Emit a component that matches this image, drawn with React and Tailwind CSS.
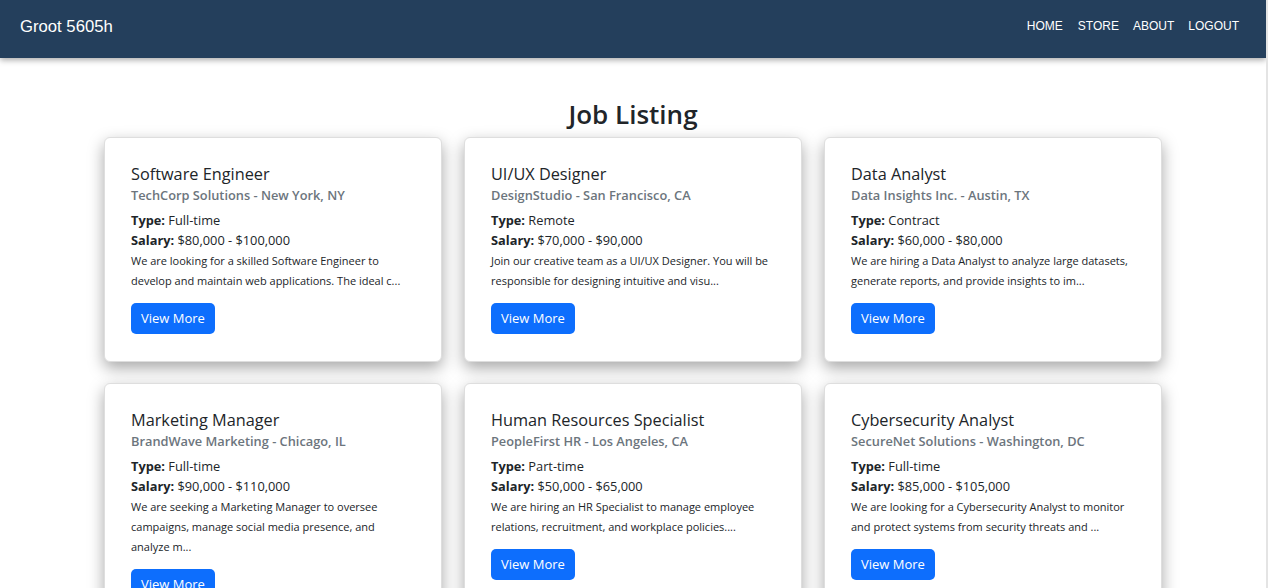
import React from "react";

const jobs = [
  {
    title: "Software Engineer",
    company: "TechCorp Solutions - New York, NY",
    type: "Full-time",
    salary: "$80,000 - $100,000",
    desc: "We are looking for a skilled Software Engineer to develop and maintain web applications. The ideal c...",
  },
  {
    title: "UI/UX Designer",
    company: "DesignStudio - San Francisco, CA",
    type: "Remote",
    salary: "$70,000 - $90,000",
    desc: "Join our creative team as a UI/UX Designer. You will be responsible for designing intuitive and visu...",
  },
  {
    title: "Data Analyst",
    company: "Data Insights Inc. - Austin, TX",
    type: "Contract",
    salary: "$60,000 - $80,000",
    desc: "We are hiring a Data Analyst to analyze large datasets, generate reports, and provide insights to im...",
  },
  {
    title: "Marketing Manager",
    company: "BrandWave Marketing - Chicago, IL",
    type: "Full-time",
    salary: "$90,000 - $110,000",
    desc: "We are seeking a Marketing Manager to oversee campaigns, manage social media presence, and analyze m...",
  },
  {
    title: "Human Resources Specialist",
    company: "PeopleFirst HR - Los Angeles, CA",
    type: "Part-time",
    salary: "$50,000 - $65,000",
    desc: "We are hiring an HR Specialist to manage employee relations, recruitment, and workplace policies....",
  },
  {
    title: "Cybersecurity Analyst",
    company: "SecureNet Solutions - Washington, DC",
    type: "Full-time",
    salary: "$85,000 - $105,000",
    desc: "We are looking for a Cybersecurity Analyst to monitor and protect systems from security threats and ...",
  },
];

function JobCard({ job }) {
  return (
    <div className="bg-white border border-[#dedede] rounded-[6px] shadow-[0_6px_16px_rgba(0,0,0,0.35)] px-[26px] pt-[25px] pb-[27px] text-[#212529]">
      <h5 className="text-[16.3px] leading-[22px] font-medium">{job.title}</h5>
      <h6 className="text-[12.8px] leading-[20px] font-semibold text-[#6c757d]">{job.company}</h6>
      <p className="mt-[5px] text-[12.8px] leading-[20px]">
        <span className="font-bold">Type:</span> {job.type}
      </p>
      <p className="text-[12.8px] leading-[20px]">
        <span className="font-bold">Salary:</span> {job.salary}
      </p>
      <p className="mt-[1px] text-[11px] leading-[20px]">{job.desc}</p>
      <button className="mt-[12px] h-[31px] px-[10px] rounded-[5px] bg-[#0d6efd] text-white text-[13px] leading-[31px]">
        View More
      </button>
    </div>
  );
}

export default function App() {
  return (
    <div
      className="h-[588px] overflow-hidden bg-white border-r-2 border-[#e4e4e4]"
      style={{ fontFamily: '"Open Sans", "Noto Sans", sans-serif' }}
    >
      <nav
        className="relative z-10 h-[58px] bg-[#243f5c] shadow-[0_2px_6px_rgba(0,0,0,0.35)] flex items-center justify-between pl-[20px] pr-[27px] text-white"
        style={{ fontFamily: '"Liberation Sans", Arial, sans-serif' }}
      >
        <div className="text-[16.7px] leading-none -mt-[4px]">Groot 5605h</div>
        <div className="flex items-center gap-[14px] text-[12px] leading-none -mt-[6px]">
          <span className="mr-[1px]">HOME</span>
          <span>STORE</span>
          <span>ABOUT</span>
          <span>LOGOUT</span>
        </div>
      </nav>
      <main>
        <h2 className="mt-[39px] mb-[6px] text-center text-[26px] leading-[34px] font-semibold text-[#212529]">
          Job Listing
        </h2>
        <div className="w-[1058px] mx-auto grid grid-cols-3 gap-x-[22px] gap-y-[21px]">
          {jobs.map((job) => (
            <JobCard key={job.title} job={job} />
          ))}
        </div>
      </main>
    </div>
  );
}
